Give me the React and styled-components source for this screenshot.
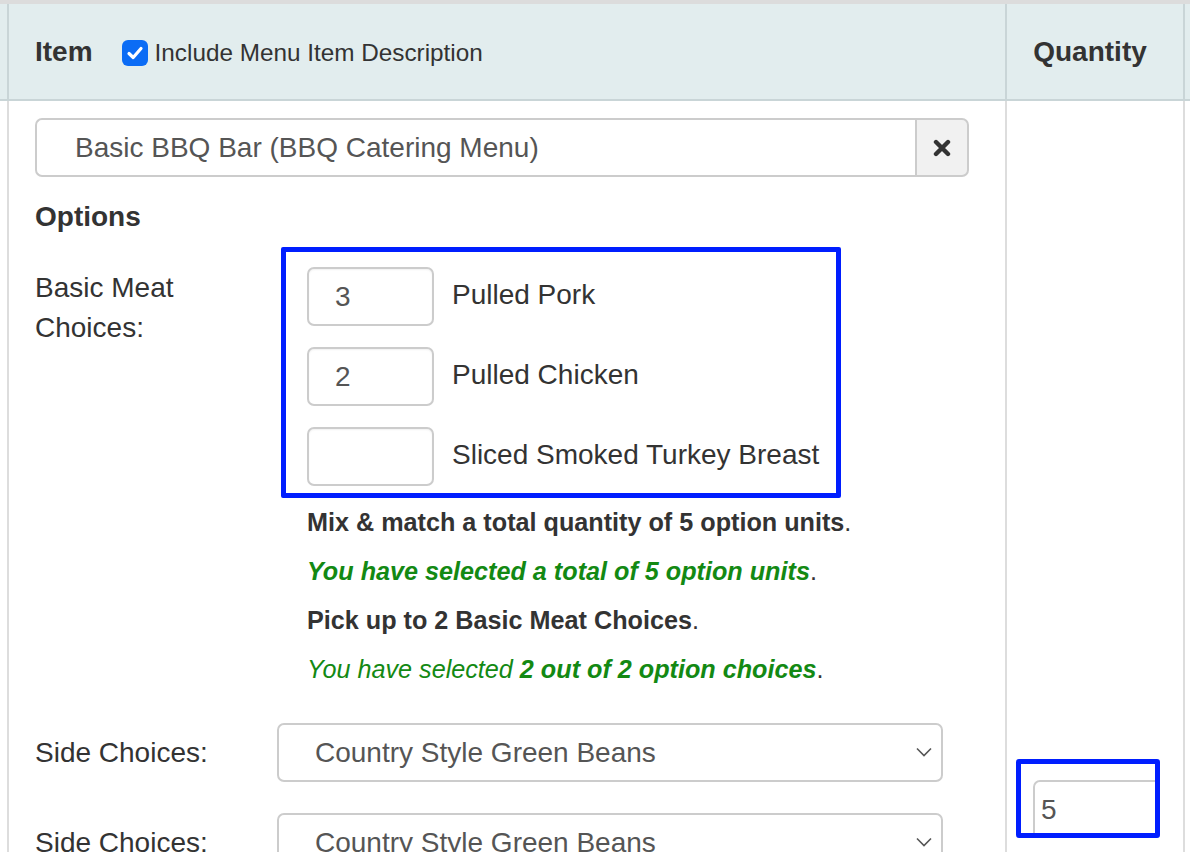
import React from 'react';
import styled, { createGlobalStyle } from 'styled-components';

const GlobalStyle = createGlobalStyle`
  html, body {
    margin: 0;
    padding: 0;
    background: #fff;
  }
  body {
    font-family: "Liberation Sans", Arial, Helvetica, sans-serif;
    color: #333;
    overflow: hidden;
  }
`;

const Table = styled.div`
  display: grid;
  grid-template-columns: 7px 998px 178px 1fr;
  border-top: 4px solid #dcdcdc;
  width: 1190px;
  height: 848px;
  grid-template-rows: 97px 1fr;
`;

const HeadCell = styled.div`
  background: #e2edee;
  border-bottom: 2px solid #c9d5d7;
  border-left: ${(p) => (p.first ? 'none' : '2px solid #c9d5d7')};
  display: flex;
  align-items: center;
  justify-content: ${(p) => (p.center ? 'center' : 'flex-start')};
  padding-left: ${(p) => p.pl || 0}px;
  padding-right: ${(p) => p.pr || 0}px;
  font-size: 28px;
  font-weight: bold;
  color: #333;
`;

const BodyCell = styled.div`
  border-left: ${(p) => (p.first ? 'none' : '2px solid #dddddd')};
  overflow: hidden;
`;

const ItemCell = styled(BodyCell)`
  padding: 17px 0 0 26px;
`;

const QtyCell = styled(BodyCell)`
  padding: 658px 0 0 9px;
`;

const HeadLabel = styled.label`
  display: flex;
  align-items: center;
  margin-left: 29px;
  margin-top: 3px;
  font-size: 24.3px;
  font-weight: normal;
  color: #333;
`;

const CheckBox = styled.span`
  width: 26px;
  height: 26px;
  border-radius: 6px;
  background: #0b6cf5;
  display: inline-flex;
  align-items: center;
  justify-content: center;
  margin-right: 7px;
`;

const InputGroup = styled.div`
  display: flex;
  width: 934px;
  height: 59px;
`;

const GroupInput = styled.div`
  flex: 1;
  border: 2px solid #cccccc;
  border-right: none;
  border-radius: 7px 0 0 7px;
  display: flex;
  align-items: center;
  padding-left: 38px;
  font-size: 28px;
  color: #555;
`;

const ClearButton = styled.div`
  width: 54px;
  box-sizing: border-box;
  border: 2px solid #cccccc;
  border-radius: 0 7px 7px 0;
  background: #f1f1f1;
  display: flex;
  align-items: center;
  justify-content: center;
`;

const SectionTitle = styled.div`
  margin-top: 20px;
  font-size: 28px;
  line-height: 40px;
  font-weight: bold;
`;

const OptionRow = styled.div`
  display: grid;
  grid-template-columns: 242px 1fr;
  margin-top: ${(p) => p.mt || 0}px;
`;

const RowLabel = styled.div`
  font-size: 28px;
  line-height: ${(p) => p.lh || 40}px;
  padding-top: ${(p) => p.pt || 0}px;
`;

const ChoiceBox = styled.div`
  margin-left: 4px;
  width: 560px;
  box-sizing: border-box;
  border: 5px solid #001eff;
  border-radius: 2px;
  padding: 15px 0 7px 21px;
  display: flex;
  flex-direction: column;
  gap: 21px;
`;

const Choice = styled.div`
  display: flex;
  align-items: center;
  gap: 18px;
  height: 59px;
  font-size: 28px;
`;

const ChoiceName = styled.span`
  margin-top: -3px;
`;

const SmallInput = styled.div`
  width: 127px;
  height: 59px;
  box-sizing: border-box;
  border: 2px solid #cccccc;
  border-radius: 7px;
  display: flex;
  align-items: center;
  padding-left: 26px;
  font-size: 28px;
  color: #555;
  box-shadow: inset 0 1px 2px rgba(0, 0, 0, 0.06);
`;

const Notes = styled.div`
  padding-left: 30px;
  font-size: 25.2px;
  line-height: 49px;
`;

const Note = styled.div`
  color: ${(p) => (p.green ? '#138913' : '#333')};
  font-weight: ${(p) => (p.bold ? 'bold' : 'normal')};
  font-style: ${(p) => (p.italic ? 'italic' : 'normal')};
  white-space: nowrap;
`;

const Plain = styled.span`
  font-weight: normal;
  font-style: normal;
  color: #333;
`;

const Strong = styled.b`
  font-weight: bold;
`;

const SelectBox = styled.div`
  position: relative;
  width: 666px;
  height: 59px;
  box-sizing: border-box;
  border: 2px solid #cccccc;
  border-radius: 7px;
  display: flex;
  align-items: center;
  padding-left: 36px;
  font-size: 28px;
  color: #555;
`;

const Chevron = styled.svg`
  position: absolute;
  right: 9px;
  top: 22px;
`;

const QtyFrame = styled.div`
  width: 144px;
  height: 79px;
  box-sizing: border-box;
  border: 5px solid #001eff;
  border-radius: 3px;
  overflow: hidden;
  padding: 16px 0 0 12px;
`;

const QtyInput = styled.div`
  width: 200px;
  height: 59px;
  box-sizing: border-box;
  border: 2px solid #cccccc;
  border-radius: 7px;
  display: flex;
  align-items: center;
  padding-left: 6px;
  font-size: 28px;
  color: #555;
`;

const meats = [
  { qty: '3', name: 'Pulled Pork' },
  { qty: '2', name: 'Pulled Chicken' },
  { qty: '', name: 'Sliced Smoked Turkey Breast' },
];

const sides = ['Country Style Green Beans', 'Country Style Green Beans'];

const App = () => {
  return (
    <>
      <GlobalStyle />
      <Table>
        <HeadCell first />
        <HeadCell pl={26}>
          Item
          <HeadLabel>
            <CheckBox>
              <svg width="18" height="18" viewBox="0 0 18 18">
                <path d="M3 9.5 L7.2 13.5 L15 4.5" fill="none" stroke="#fff" strokeWidth="3.2" strokeLinecap="round" strokeLinejoin="round" />
              </svg>
            </CheckBox>
            Include Menu Item Description
          </HeadLabel>
        </HeadCell>
        <HeadCell center pr={10}>Quantity</HeadCell>
        <HeadCell />

        <BodyCell first />
        <ItemCell>
          <InputGroup>
            <GroupInput>Basic BBQ Bar (BBQ Catering Menu)</GroupInput>
            <ClearButton>
              <svg width="18" height="18" viewBox="0 0 18 18">
                <path d="M3 3 L15 15 M15 3 L3 15" stroke="#333" strokeWidth="4.4" strokeLinecap="round" />
              </svg>
            </ClearButton>
          </InputGroup>

          <SectionTitle>Options</SectionTitle>

          <OptionRow mt={10}>
            <RowLabel pt={21}>Basic Meat<br />Choices:</RowLabel>
            <div>
              <ChoiceBox>
                {meats.map((m) => (
                  <Choice key={m.name}>
                    <SmallInput>{m.qty}</SmallInput>
                    <ChoiceName>{m.name}</ChoiceName>
                  </Choice>
                ))}
              </ChoiceBox>
              <Notes>
                <Note bold>Mix &amp; match a total quantity of 5 option units<Plain>.</Plain></Note>
                <Note bold italic green>You have selected a total of 5 option units<Plain>.</Plain></Note>
                <Note bold>Pick up to 2 Basic Meat Choices<Plain>.</Plain></Note>
                <Note italic green>You have selected <Strong>2 out of 2 option choices</Strong><Plain>.</Plain></Note>
              </Notes>
            </div>
          </OptionRow>

          {sides.map((s, i) => (
            <OptionRow key={i} mt={i === 0 ? 29 : 31}>
              <RowLabel lh={59}>Side Choices:</RowLabel>
              <SelectBox>
                {s}
                <Chevron width="16" height="10" viewBox="0 0 16 10">
                  <path d="M1 1.5 L8 8.5 L15 1.5" fill="none" stroke="#555" strokeWidth="1.6" />
                </Chevron>
              </SelectBox>
            </OptionRow>
          ))}
        </ItemCell>
        <QtyCell>
          <QtyFrame>
            <QtyInput>5</QtyInput>
          </QtyFrame>
        </QtyCell>
        <BodyCell />
      </Table>
    </>
  );
};

export default App;
